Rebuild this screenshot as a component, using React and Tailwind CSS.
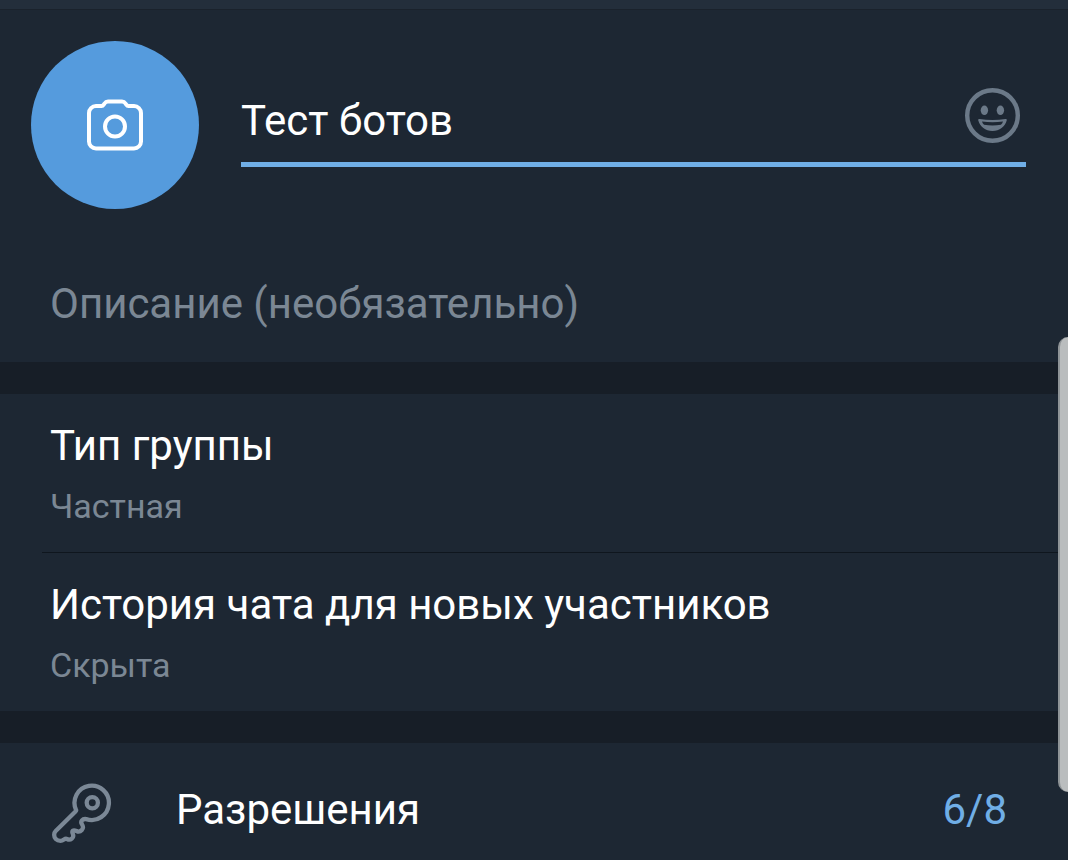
import React from "react";

function CameraIcon() {
  return (
    <svg width="56" height="52" viewBox="0 0 56 52" fill="none" stroke="#fff" strokeWidth="4" strokeLinejoin="round" aria-hidden="true">
      <path d="M9 7h5.500c1.200 0 1.600-.4 2.200-1.300l.8-1.200c.9-1.400 1.700-2 3.500-2h14c1.800 0 2.600.6 3.500 2l.8 1.200c.6.900 1 1.300 2.200 1.300H47a7 7 0 0 1 7 7V42.500a7 7 0 0 1-7 7H9a7 7 0 0 1-7-7V14a7 7 0 0 1 7-7z" />
      <circle cx="28" cy="27.500" r="10" />
    </svg>
  );
}

function SmileIcon() {
  return (
    <svg width="56" height="56" viewBox="0 0 56 56" aria-hidden="true">
      <circle cx="27.500" cy="28.500" r="25.300" fill="none" stroke="#6b7988" strokeWidth="4.400" />
      <ellipse cx="19.400" cy="23.300" rx="3.700" ry="4.800" fill="#6b7988" />
      <ellipse cx="35.400" cy="23.300" rx="3.700" ry="4.800" fill="#6b7988" />
      <path d="M14.500 31.900C23 33.300 32 33.300 40.500 31.900C41.600 31.800 42 32.400 41.700 33.500C40 39.800 34.600 44 27.500 44S15 39.800 13.300 33.500C13 32.400 13.400 31.800 14.500 31.900z" fill="#6b7988" />
      <path d="M17 34.500C24 35.600 31 35.600 38 34.500C37.500 36 36.800 37 36 37.700C30.500 38.800 24.500 38.800 19 37.700C18.200 37 17.500 36 17 34.500z" fill="#1d2733" />
    </svg>
  );
}

function KeyIcon() {
  return (
    <svg width="60" height="60" viewBox="0 0 60 60" fill="none" stroke="#7b8896" strokeWidth="4.300" strokeLinejoin="round" strokeLinecap="round" aria-hidden="true">
      <path d="M24 26.800A17.200 17.200 0 1 1 34.200 36.100C30.500 35.500 28 38.500 30 41.300C32.800 45.600 28.500 50 24.500 48C21 46.300 19.500 48 20.800 50.800C22.500 54.800 18.500 57.800 15 56C12.500 54.800 12 57.800 8.500 57.800C4.500 57.800 2 55 2.200 51.500C2.200 50 2.700 49 3.700 48L23.500 28.500Q24.500 27.500 24 26.800Z" />
      <circle cx="40.300" cy="19.800" r="5.600" />
    </svg>
  );
}

function SettingRow({ title, value }) {
  return (
    <button type="button" className="block w-full px-[50px] pt-7 pb-[26px] text-left">
      <span className="block text-[42px] leading-[48px] text-white">{title}</span>
      <span className="mt-4 block text-[34px] leading-10 text-[#7b8794]">{value}</span>
    </button>
  );
}

export default function App() {
  return (
    <div className="relative min-h-screen overflow-hidden bg-[#1d2733] font-['Roboto',sans-serif]">
      <header className="h-[10px] border-b border-[#1a222c] bg-[#232e3b]" />
      <main>
        <section className="pt-[31px]">
          <div className="flex items-start pr-[42px] pl-[31px]">
            <button type="button" aria-label="Фото группы" className="flex size-[168px] shrink-0 items-center justify-center rounded-full bg-[#559bdd]">
              <CameraIcon />
            </button>
            <div className="mt-[46px] ml-[42px] flex min-w-0 flex-1 items-start border-b-[5px] border-[#70aee6] pb-[9px]">
              <input
                type="text"
                aria-label="Название группы"
                defaultValue="Тест ботов"
                className="h-[66px] min-w-0 flex-1 bg-transparent text-[42px] leading-[56px] text-white outline-none"
              />
              <button type="button" aria-label="Эмодзи" className="mr-[5px]">
                <SmileIcon />
              </button>
            </div>
          </div>
          <div className="px-[50px] pt-[67px] pb-[30px]">
            <input
              type="text"
              aria-label="Описание"
              placeholder="Описание (необязательно)"
              className="block h-14 w-full bg-transparent text-[42px] leading-[56px] text-white outline-none placeholder:text-[#7b8794]"
            />
          </div>
        </section>
        <div className="h-8 bg-[#171e27]" />
        <section>
          <SettingRow title="Тип группы" value="Частная" />
          <div className="ml-[42px] h-px bg-[#0f161e]" />
          <SettingRow title="История чата для новых участников" value="Скрыта" />
        </section>
        <div className="h-8 bg-[#171e27]" />
        <button type="button" className="flex w-full items-start pt-10 pr-[61px] pb-4 pl-[52px] text-left text-[42px] leading-[54px]">
          <KeyIcon />
          <span className="ml-16 flex-1 text-white">Разрешения</span>
          <span className="text-[#70aee6]">6/8</span>
        </button>
      </main>
      <div className="absolute top-[337px] right-0 h-[455px] w-[10px] rounded-l-[10px] border-l-2 border-[#8f9497] bg-[#babdbe]" />
    </div>
  );
}
